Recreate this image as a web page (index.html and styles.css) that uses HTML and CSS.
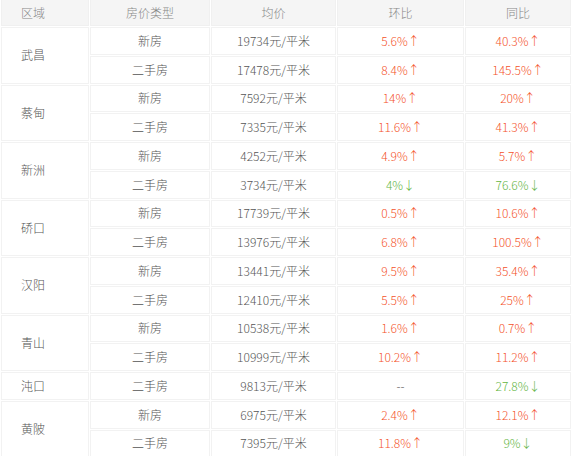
FILE: index.html
```html
<!DOCTYPE html>
<html lang="zh">
<head>
<meta charset="utf-8">
<link rel="stylesheet" href="styles.css">
</head>
<body>
<table class="price-table">
  <colgroup>
    <col class="c-area"><col class="c-type"><col class="c-price"><col class="c-mom"><col class="c-yoy">
  </colgroup>
  <thead>
    <tr><th class="area">区域</th><th>房价类型</th><th>均价</th><th>环比</th><th>同比</th></tr>
  </thead>
  <tbody>
    <tr><td class="area" rowspan="2">武昌</td><td>新房</td><td>19734元/平米</td><td class="up">5.6%↑</td><td class="up">40.3%↑</td></tr>
    <tr><td>二手房</td><td>17478元/平米</td><td class="up">8.4%↑</td><td class="up">145.5%↑</td></tr>
    <tr><td class="area" rowspan="2">蔡甸</td><td>新房</td><td>7592元/平米</td><td class="up">14%↑</td><td class="up">20%↑</td></tr>
    <tr><td>二手房</td><td>7335元/平米</td><td class="up">11.6%↑</td><td class="up">41.3%↑</td></tr>
    <tr><td class="area" rowspan="2">新洲</td><td>新房</td><td>4252元/平米</td><td class="up">4.9%↑</td><td class="up">5.7%↑</td></tr>
    <tr><td>二手房</td><td>3734元/平米</td><td class="down">4%↓</td><td class="down">76.6%↓</td></tr>
    <tr><td class="area" rowspan="2">硚口</td><td>新房</td><td>17739元/平米</td><td class="up">0.5%↑</td><td class="up">10.6%↑</td></tr>
    <tr><td>二手房</td><td>13976元/平米</td><td class="up">6.8%↑</td><td class="up">100.5%↑</td></tr>
    <tr><td class="area" rowspan="2">汉阳</td><td>新房</td><td>13441元/平米</td><td class="up">9.5%↑</td><td class="up">35.4%↑</td></tr>
    <tr><td>二手房</td><td>12410元/平米</td><td class="up">5.5%↑</td><td class="up">25%↑</td></tr>
    <tr><td class="area" rowspan="2">青山</td><td>新房</td><td>10538元/平米</td><td class="up">1.6%↑</td><td class="up">0.7%↑</td></tr>
    <tr><td>二手房</td><td>10999元/平米</td><td class="up">10.2%↑</td><td class="up">11.2%↑</td></tr>
    <tr><td class="area">沌口</td><td>二手房</td><td>9813元/平米</td><td>--</td><td class="down">27.8%↓</td></tr>
    <tr><td class="area" rowspan="2">黄陂</td><td>新房</td><td>6975元/平米</td><td class="up">2.4%↑</td><td class="up">12.1%↑</td></tr>
    <tr><td>二手房</td><td>7395元/平米</td><td class="up">11.8%↑</td><td class="down">9%↓</td></tr>
  </tbody>
</table>
</body>
</html>
```

FILE: styles.css
```css
html, body {
  margin: 0;
  padding: 0;
  background: #fff;
}
body {
  font-family: "Noto Sans CJK SC", "Noto Sans", sans-serif;
  font-size: 12px;
  font-weight: 300;
  color: #555;
}
.price-table {
  width: 572px;
  border-collapse: separate;
  border-spacing: 1px;
  table-layout: fixed;
  margin-top: -2px;
}
.c-area { width: 88px; }
.c-type { width: 120px; }
.c-price { width: 125px; }
.c-mom { width: 127px; }
.c-yoy { width: 106px; }
.price-table th,
.price-table td {
  box-sizing: border-box;
  border: 1px solid #f2f2f2;
  text-align: center;
  padding: 0;
  line-height: 16px;
  white-space: nowrap;
}
.price-table th {
  background: #f5f5f5;
  border-color: #f0f0f0;
  color: #888;
  font-weight: 300;
  height: 27px;
}
.price-table td {
  height: 27.75px;
}
.price-table .area {
  text-align: left;
  padding-left: 19px;
}
.up { color: #f4522b; }
.down { color: #63b53f; }
```
